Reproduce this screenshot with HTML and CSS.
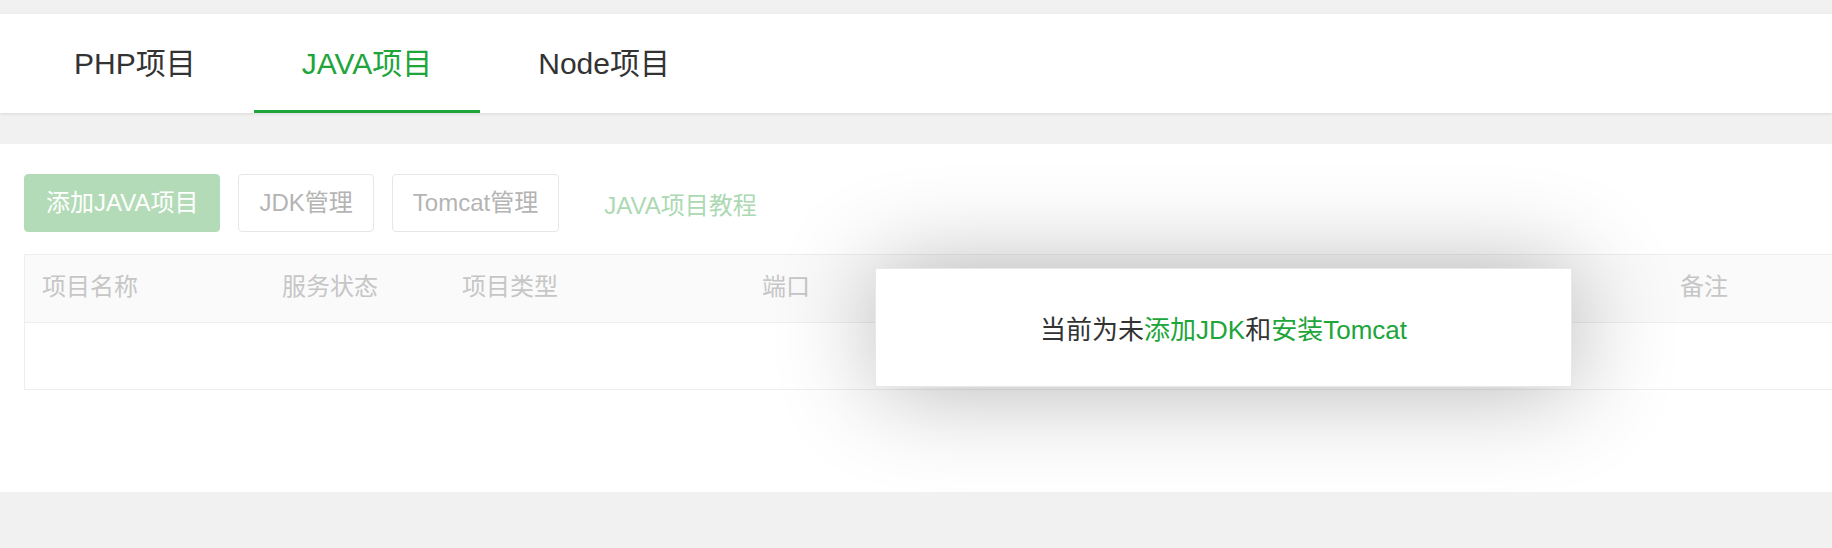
FILE: index.html
```html
<!DOCTYPE html>
<html lang="zh-CN">
<head>
    <meta charset="UTF-8">
    <title>项目管理</title>
    <link rel="stylesheet" href="styles.css">
</head>
<body>

<div class="tabs">
    <div class="tab">PHP项目</div>
    <div class="tab active">JAVA项目</div>
    <div class="tab">Node项目</div>
</div>

<div class="panel">
    <div class="toolbar">
        <div class="btn btn-green">添加JAVA项目</div>
        <div class="btn">JDK管理</div>
        <div class="btn">Tomcat管理</div>
        <a class="tutorial">JAVA项目教程</a>
    </div>

    <div class="table">
        <div class="thead">
            <div class="col c1">项目名称</div>
            <div class="col c2">服务状态</div>
            <div class="col c3">项目类型</div>
            <div class="col c4">端口</div>
            <div class="col c5">备注</div>
        </div>
        <div class="tbody"></div>
    </div>
</div>

<!-- tip layer -->
<div class="layer">
    当前为未<a>添加JDK</a>和<a>安装Tomcat</a>
</div>

</body>
</html>
```

FILE: styles.css
```css
* {
    box-sizing: border-box;
}

body {
    margin: 0;
    padding-top: 14px;
    background-color: #f1f1f1;
    font-family: "Liberation Sans", "Noto Sans CJK SC", sans-serif;
    color: #333;
    overflow: hidden;
}

.tabs {
    display: flex;
    height: 99px;
    padding-left: 26px;
    background-color: #fff;
    box-shadow: 0 1px 3px rgba(0, 0, 0, 0.1);
}

.tab {
    display: flex;
    align-items: center;
    padding: 0 48px 2px;
    margin-right: 10px;
    font-size: 30px;
    color: #333;
    border-bottom: 3px solid transparent;
}

.tab.active {
    color: #20a53a;
    border-bottom-color: #20a53a;
}

.panel {
    margin-top: 31px;
    height: 348px;
    padding: 30px 0 0 24px;
    background-color: #fff;
    overflow: hidden;
}

.toolbar {
    display: flex;
    align-items: center;
    gap: 18px;
}

.btn {
    height: 58px;
    line-height: 56px;
    padding: 0 20px;
    font-size: 24px;
    color: #b4b4b4;
    border: 1px solid #e6e6e6;
    border-radius: 4px;
    background-color: #fff;
}

.btn-green {
    padding: 0 21px;
    color: #fff;
    background-color: #b3dbb7;
    border-color: #b3dbb7;
}

.tutorial {
    margin-left: 27px;
    font-size: 24px;
    color: #acd9b3;
}

.table {
    width: 1900px;
    margin-top: 22px;
    border: 1px solid #eee;
}

.thead {
    display: flex;
    height: 68px;
    padding-bottom: 8px;
    align-items: center;
    background-color: #fafafa;
    border-bottom: 1px solid #eee;
}

.col {
    padding-left: 17px;
    font-size: 24px;
    color: #c6c6c6;
}

.c1 { width: 240px; }
.c2 { width: 180px; }
.c3 { width: 300px; }
.c4 { width: 918px; }

.tbody {
    height: 66px;
}

.layer {
    position: absolute;
    left: 875px;
    top: 268px;
    width: 697px;
    height: 119px;
    display: flex;
    align-items: center;
    justify-content: center;
    font-size: 26px;
    color: #333;
    background-color: #fff;
    border: 1px solid #e8e8e8;
    border-radius: 2px;
    box-shadow: 2px 2px 100px rgba(0, 0, 0, 0.3);
}

.layer a {
    color: #20a53a;
}
```
